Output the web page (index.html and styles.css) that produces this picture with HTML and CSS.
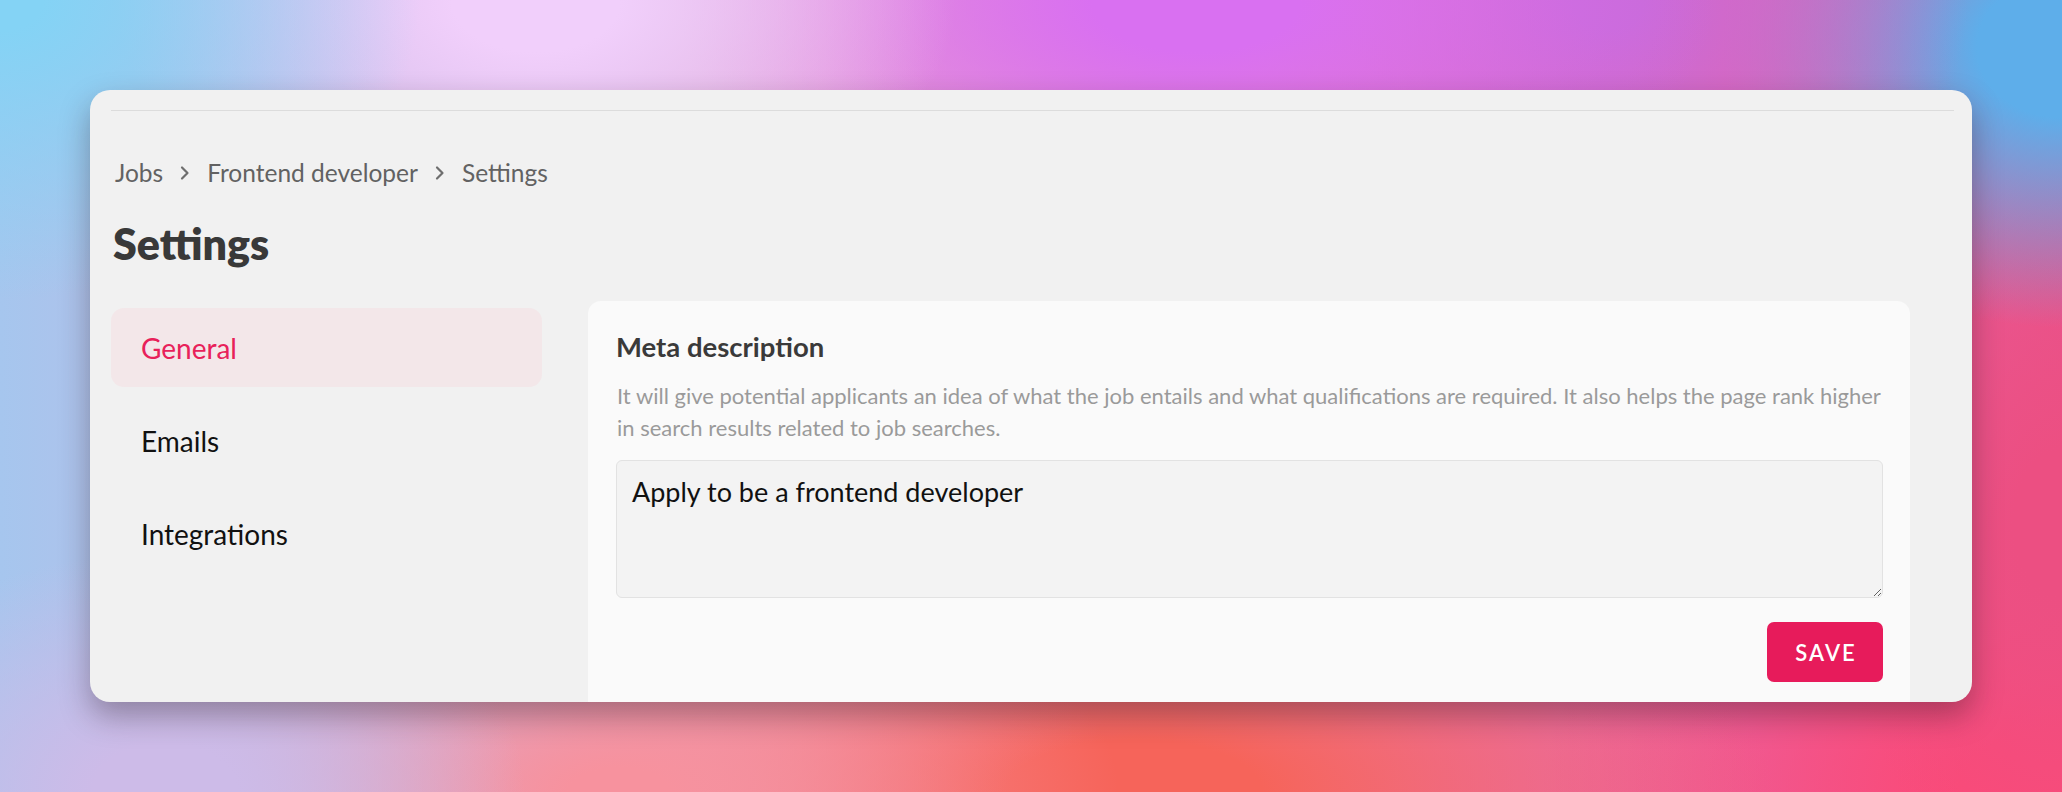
FILE: index.html
```html
<!DOCTYPE html>
<html lang="en">
<head>
<meta charset="utf-8">
<title>Settings</title>
<link rel="stylesheet" href="styles.css">
</head>
<body>
<div class="backdrop">
  <div class="window">
    <div class="topbar"></div>
    <nav class="crumbs">
      <span class="crumb">Jobs</span>
      <svg class="chev" width="12" height="16" viewBox="0 0 12 16"><path d="M3 2.5 L8.5 8 L3 13.5" fill="none" stroke="#6e6e6e" stroke-width="2.2" stroke-linecap="round" stroke-linejoin="round"/></svg>
      <span class="crumb">Frontend developer</span>
      <svg class="chev" width="12" height="16" viewBox="0 0 12 16"><path d="M3 2.5 L8.5 8 L3 13.5" fill="none" stroke="#6e6e6e" stroke-width="2.2" stroke-linecap="round" stroke-linejoin="round"/></svg>
      <span class="crumb">Settings</span>
    </nav>
    <h1 class="title">Settings</h1>
    <div class="layout">
      <ul class="side">
        <li class="side-item active">General</li>
        <li class="side-item">Emails</li>
        <li class="side-item">Integrations</li>
      </ul>
      <section class="panel">
        <h2 class="panel-title">Meta description</h2>
        <p class="panel-desc">It will give potential applicants an idea of what the job entails and what qualifications are required. It also helps the page rank higher<br>in search results related to job searches.</p>
        <textarea class="field">Apply to be a frontend developer</textarea>
        <div class="actions"><button class="save">SAVE</button></div>
      </section>
    </div>
  </div>
</div>
</body>
</html>
```

FILE: styles.css
```css
* { box-sizing: border-box; }
html, body { margin: 0; padding: 0; }
body {
  width: 2062px;
  height: 792px;
  overflow: hidden;
  font-family: "Lato", "Noto Sans", sans-serif;
}
.backdrop {
  width: 2062px;
  height: 792px;
  padding: 90px 0 0 90px;
  background:
    radial-gradient(ellipse 420px 300px at 0% 0%, #84d3f5 10%, rgba(132,211,245,0) 100%),
    radial-gradient(ellipse 420px 260px at 26% 0%, #f1cffb 20%, rgba(241,207,251,0) 100%),
    radial-gradient(ellipse 520px 260px at 58% 0%, #d970f1 20%, rgba(217,112,241,0) 100%),
    radial-gradient(ellipse 360px 300px at 78% 0%, #c86ad8 10%, rgba(200,106,216,0) 100%),
    radial-gradient(ellipse 340px 280px at 100% 6%, #5eaeea 25%, rgba(94,174,234,0) 100%),
    radial-gradient(ellipse 240px 360px at 100% 66%, #ec4f82 20%, rgba(236,79,130,0) 100%),
    radial-gradient(ellipse 360px 240px at 8% 100%, #cdbbe8 20%, rgba(205,187,232,0) 100%),
    radial-gradient(ellipse 500px 240px at 30% 100%, #f7929e 10%, rgba(247,146,158,0) 100%),
    radial-gradient(ellipse 640px 260px at 55% 100%, #f6645a 20%, rgba(246,100,90,0) 100%),
    radial-gradient(ellipse 520px 320px at 100% 100%, #fb4a78 20%, rgba(251,74,120,0) 100%),
    linear-gradient(90deg, #a6c6ee 0%, #e6a6d6 40%, #e874b8 70%, #e85590 100%);
}
.window {
  width: 1882px;
  height: 612px;
  background: #f1f1f1;
  border-radius: 20px;
  overflow: hidden;
  box-shadow: 0 14px 30px rgba(40, 20, 30, 0.35);
}
.topbar {
  height: 21px;
  margin: 0 18px 0 21px;
  border-bottom: 1px solid #dcdcdc;
}
.crumbs {
  display: flex;
  align-items: center;
  gap: 16px;
  margin: 45px 0 0 25px;
  height: 32px;
  font-size: 24.5px;
  color: #626262;
}
.chev { display: block; margin-top: 1px; }
.title {
  margin: 30px 0 0 23px;
  font-size: 43px;
  line-height: 52px;
  font-weight: 800;
  color: #393939;
}
.layout {
  display: flex;
  gap: 46px;
  margin-top: 31px;
  padding: 0 62px 0 21px;
}
.side {
  list-style: none;
  margin: 7px 0 0;
  padding: 0;
  width: 431px;
  flex: none;
  display: flex;
  flex-direction: column;
  gap: 14px;
}
.side-item {
  height: 79px;
  display: flex;
  align-items: center;
  padding-left: 30px;
  font-size: 28px;
  color: #111;
  border-radius: 13px;
}
.side-item.active {
  background: #f3e7e9;
  color: #e8215a;
}
.panel {
  flex: 1;
  background: #fafafa;
  border-radius: 13px;
  padding: 28px 27px 40px 28px;
  height: 420px;
}
.panel-title {
  margin: 0;
  font-size: 27.5px;
  line-height: 36px;
  font-weight: 700;
  color: #3a3a3a;
}
.panel-desc {
  margin: 15px 0 0 1px;
  font-size: 22px;
  line-height: 32px;
  color: #9a9a9a;
  white-space: nowrap;
}
.field {
  display: block;
  width: 100%;
  height: 138px;
  margin-top: 16px;
  padding: 13px 15px;
  background: #f3f3f3;
  border: 1px solid #e2e2e2;
  border-radius: 6px;
  font-family: "Lato", "Noto Sans", sans-serif;
  font-size: 27px;
  line-height: 36px;
  color: #111;
  resize: vertical;
  outline: none;
}
.actions {
  display: flex;
  justify-content: flex-end;
  margin-top: 24px;
}
.save {
  width: 116px;
  height: 60px;
  border: none;
  border-radius: 7px;
  background: #e71b5b;
  color: #fff;
  font-family: "Lato", "Noto Sans", sans-serif;
  font-size: 22px;
  font-weight: 600;
  letter-spacing: 2px;
  padding: 0 0 0 2px;
}
```
